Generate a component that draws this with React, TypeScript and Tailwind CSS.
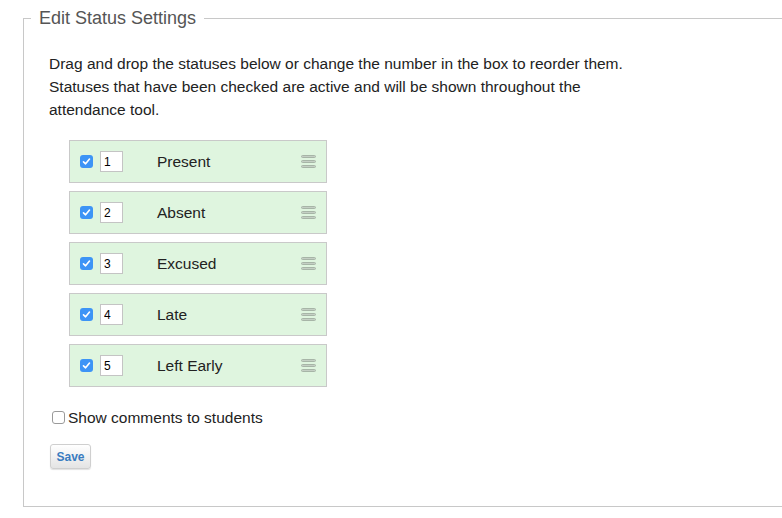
const statuses = ['Present', 'Absent', 'Excused', 'Late', 'Left Early'];

function DragHandle() {
  return (
    <div className="flex w-[15px] flex-col gap-[2px]">
      <span className="h-[3px] rounded-[2px] border border-[#a7b5a7] bg-[#c4cfc4]" />
      <span className="h-[3px] rounded-[2px] border border-[#a7b5a7] bg-[#c4cfc4]" />
      <span className="h-[3px] rounded-[2px] border border-[#a7b5a7] bg-[#c4cfc4]" />
    </div>
  );
}

function BlueCheck() {
  return (
    <span className="flex h-[13px] w-[13px] items-center justify-center rounded-[3px] bg-[#3d94f6]">
      <svg width="9" height="9" viewBox="0 0 9 9">
        <path d="M1.5 4.8 L3.6 6.8 L7.5 2" fill="none" stroke="white" strokeWidth="1.6" strokeLinecap="round" strokeLinejoin="round" />
      </svg>
    </span>
  );
}

export default function App() {
  return (
    <div className="h-[518px] w-[782px] overflow-hidden bg-white font-['Liberation_Sans',Arial,sans-serif] text-[#222]">
      <fieldset className="ml-[23px] mt-[7px] h-[500px] w-[800px] border border-r-0 border-[#c8c8c8]">
        <legend className="ml-[7px] px-[8px] text-[18px] leading-[22px] text-[#555]">Edit Status Settings</legend>
        <div className="pl-[25px]">
          <p className="mt-[23px] w-[590px] text-[15.5px] leading-[23px]">
            Drag and drop the statuses below or change the number in the box to reorder them.
            Statuses that have been checked are active and will be shown throughout the attendance tool.
          </p>
          <div className="ml-[20px] mt-[19px] flex flex-col gap-[8px]">
            {statuses.map((name, i) => (
              <div
                key={name}
                className="flex h-[43px] w-[258px] items-center border border-[#c9c9c9] bg-[#dff5df] pl-[10px] pr-[10px]"
              >
                <BlueCheck />
                <input
                  readOnly
                  value={i + 1}
                  className="ml-[7px] h-[21px] w-[23px] border border-[#c4c4c4] bg-white px-[3px] text-[12px] text-black outline-none"
                />
                <span className="ml-[34px] flex-1 text-[15.5px] text-[#222]">{name}</span>
                <DragHandle />
              </div>
            ))}
          </div>
          <label className="ml-[3px] mt-[19px] flex items-center text-[15.5px] text-[#222]">
            <span className="mr-[3px] h-[13px] w-[13px] rounded-[3px] border border-[#9a9a9a] bg-white" />
            Show comments to students
          </label>
          <button className="ml-[1px] mt-[15px] h-[25px] w-[41px] rounded-[3px] border border-[#cfcfcf] bg-gradient-to-b from-white to-[#e4e4e4] text-[12px] font-bold text-[#3a7cc0] shadow-[0_1px_1px_rgba(0,0,0,0.12)]">
            Save
          </button>
        </div>
      </fieldset>
    </div>
  );
}
